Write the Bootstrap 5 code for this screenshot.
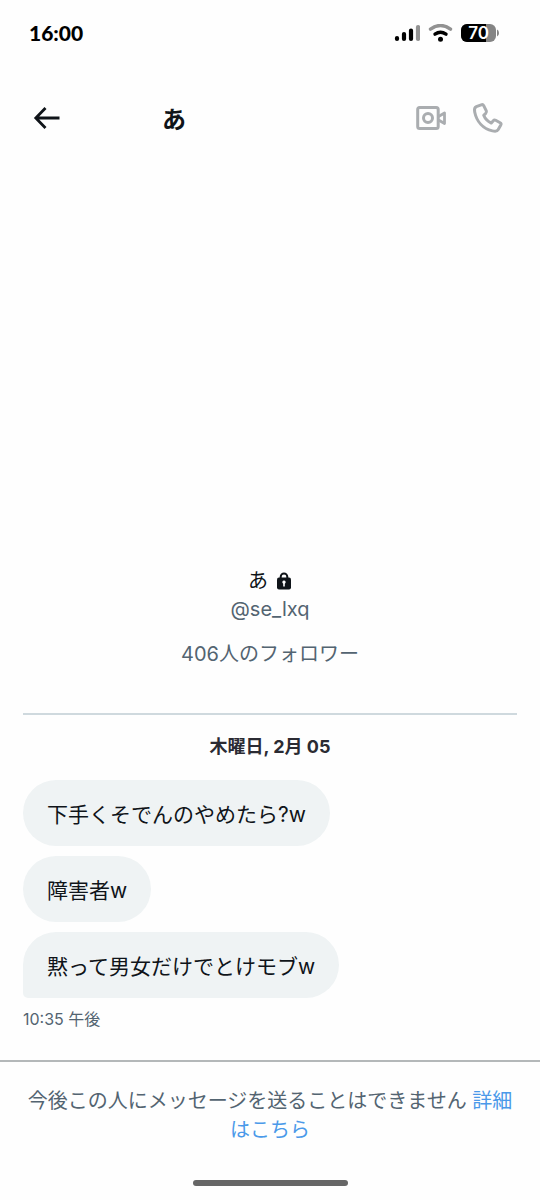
<!DOCTYPE html>
<html lang="ja">
<head>
<meta charset="utf-8">
<meta name="viewport" content="width=device-width, initial-scale=1">
<title>メッセージ</title>
<link href="https://cdn.jsdelivr.net/npm/bootstrap@5.3.0/dist/css/bootstrap.min.css" rel="stylesheet">
<style>
body { font-family: Inter, "Noto Sans CJK JP", sans-serif; color: #0f1419; background: #fefefe; font-size: 20px; line-height: 28px; }
.status-bar { height: 66px; padding: 0 41px 0 29px; }
.clock { font-family: Lato, sans-serif; font-weight: 900; font-size: 21px; color: #000; }
.chat-header { height: 104px; padding: 0 36px 0 32px; }
.chat-title { font-size: 24px; line-height: 32px; font-weight: 700; margin-left: 100px; padding-top: 4px; }
.muted-text { color: #536471; }
.follower-count { margin-top: 17px; }
.chat-body { padding: 0 23px 29px; }
.divider { margin: 45px 0 20px; border-top: 2px solid #cfd9de; opacity: 1; }
.date-label { font-size: 18px; line-height: 24px; font-weight: 700; color: #2b2b33; margin-bottom: 21px; }
.bubble { background: #eff3f4; border-radius: 33px; padding: 20px 24px 16px; font-size: 21px; line-height: 30px; }
.bubble-list { gap: 10px; }
.bubble-last { border-bottom-left-radius: 5px; }
.sent-time { font-size: 16px; line-height: 24px; margin-top: 9px; }
.notice { border-top: 2px solid #b4b8b9; padding: 25px 24px 35px; line-height: 29px; }
.notice a { color: #4a99e9; }
.home-bar { width: 155px; height: 6px; background: #666; margin-bottom: 14px; }
</style>
<script src="https://cdn.jsdelivr.net/npm/bootstrap@5.3.0/dist/js/bootstrap.bundle.min.js" defer></script>
</head>
<body>
<div class="d-flex flex-column min-vh-100">
  <div class="status-bar d-flex align-items-center justify-content-between">
    <span class="clock">16:00</span>
    <div class="d-flex align-items-center gap-2">
      <svg width="26" height="18" viewBox="0 0 26 18" aria-hidden="true"><g stroke-width="4.200" stroke-linecap="round" stroke="#000"><path d="M3 14v1M10 10v5M17 6.500v8.500"/><path d="M24 3v12" stroke="#929292"/></g></svg>
      <svg width="25" height="18" viewBox="0 0 25 18" fill="none" stroke-linecap="round" aria-hidden="true"><path d="M2.500 5.200Q12.500-2.200 22.500 5.200" stroke="#929292" stroke-width="3.400"/><path d="M7 10.200Q12.500 6.200 18 10.200" stroke="#000" stroke-width="3.400"/><circle cx="12.500" cy="15.200" r="2.500" fill="#000"/></svg>
      <svg width="38" height="20" viewBox="0 0 38 20" aria-label="70%"><rect y="1" width="35" height="18" rx="6" fill="#848484"/><path d="M6 1h19v18H6a6 6 0 0 1-6-6V7a6 6 0 0 1 6-6z"/><path d="M36 6.500q2 .5 2 3.500t-2 3.500z" fill="#848484"/><text x="17.500" y="16" text-anchor="middle" font-family="Inter, sans-serif" font-size="17" font-weight="600" fill="#fff">70</text></svg>
    </div>
  </div>
  <header class="chat-header d-flex align-items-center">
    <button type="button" class="btn border-0 p-0 d-flex" aria-label="戻る">
      <svg width="30" height="30" viewBox="0 0 30 30" fill="none" stroke="#0f1419" stroke-width="2.800"><path d="M13.500 5 3.800 15l9.700 10M4 15h23.500"/></svg>
    </button>
    <h1 class="chat-title mb-0">あ</h1>
    <div class="ms-auto d-flex align-items-center gap-4">
      <button type="button" class="btn border-0 p-0 d-flex" aria-label="ビデオ通話">
        <svg width="32" height="32" viewBox="0 0 32 32" fill="none" stroke="#aaadb0" stroke-width="3" stroke-linejoin="round"><rect x="1.700" y="5.500" width="20.500" height="21" rx="2"/><circle cx="12" cy="16" r="4.500"/><path d="m22.500 14.500 6-3.500v10.500l-6-3.500" stroke-width="2.800"/></svg>
      </button>
      <button type="button" class="btn border-0 p-0 d-flex" aria-label="音声通話">
        <svg width="32" height="32" viewBox="0 0 32 32" fill="none" stroke="#aaadb0" stroke-width="3" stroke-linejoin="round"><path d="M9.200 2.800 4.300 4.700C2.500 5.500 2.200 7.500 2.700 10c1.900 9.600 8.500 16.700 17.700 18.900 2.500.6 4.900.6 5.700-1.200l2.700-4.800c.5-1 .2-1.700-.7-2.200l-4.400-2.400c-.9-.5-1.800-.3-2.400.4l-2 2.300c-3.500-1.500-6.200-4.200-7.600-7.700l2-1.900c.8-.8 1-1.500.6-2.500l-2.600-5.200c-.5-1-1.300-1.300-2.500-.9z"/></svg>
      </button>
    </div>
  </header>
  <main class="chat-body flex-grow-1 d-flex flex-column justify-content-end">
    <section class="text-center">
      <div class="d-flex justify-content-center align-items-center gap-2">
        <span>あ</span>
        <svg width="16" height="18" viewBox="0 0 16 18" aria-label="非公開"><path d="M4.700 6V4.800a3.300 3.300 0 0 1 6.600 0V6" fill="none" stroke="#0f1419" stroke-width="2"/><rect x="1" y="5.500" width="14" height="12" rx="2" fill="#0f1419"/><path d="M8 8.500a1.700 1.700 0 0 1 .8 3.200v2.800H7.200v-2.800A1.700 1.700 0 0 1 8 8.500z" fill="#fff"/></svg>
      </div>
      <div class="muted-text">@se_lxq</div>
      <div class="muted-text follower-count">406人のフォロワー</div>
    </section>
    <hr class="divider">
    <div class="date-label text-center">木曜日, 2月 05</div>
    <div class="bubble-list d-flex flex-column align-items-start">
      <div class="bubble">下手くそでんのやめたら?w</div>
      <div class="bubble">障害者w</div>
      <div class="bubble bubble-last">黙って男女だけでとけモブw</div>
    </div>
    <div class="sent-time muted-text">10:35 午後</div>
  </main>
  <footer>
    <p class="notice muted-text text-center mb-0">今後この人にメッセージを送ることはできません <a href="#" class="text-decoration-none">詳細はこちら</a></p>
    <div class="home-bar rounded-pill mx-auto"></div>
  </footer>
</div>
</body>
</html>
